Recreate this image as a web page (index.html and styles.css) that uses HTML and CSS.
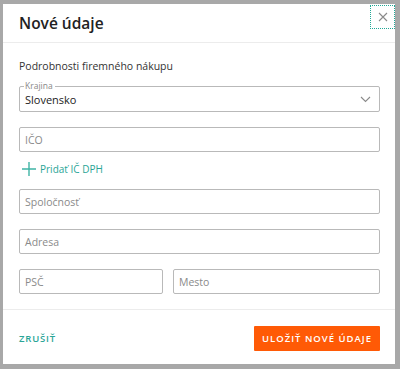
FILE: index.html
```html
<!DOCTYPE html>
<html lang="sk">
<head>
<meta charset="utf-8">
<link rel="stylesheet" href="styles.css">
</head>
<body>
<div class="modal">
  <div class="header">
    <h1 class="title">Nové údaje</h1>
    <button class="close" aria-label="Zavrieť">
      <svg width="10" height="10" viewBox="0 0 10 10"><path d="M1 1L9 9M9 1L1 9" stroke="#8a8a8a" stroke-width="1.1" fill="none"/></svg>
    </button>
  </div>
  <div class="body">
    <div class="subtitle">Podrobnosti firemného nákupu</div>
    <div class="field select">
      <span class="legend">Krajina</span>
      <span class="value">Slovensko</span>
      <svg class="chev" width="11" height="7" viewBox="0 0 11 7"><path d="M1 1L5.5 5.5L10 1" stroke="#8a8a8a" stroke-width="1.1" fill="none"/></svg>
    </div>
    <div class="field gap15"><span class="ph">IČO</span></div>
    <div class="add">
      <svg width="14" height="14" viewBox="0 0 14 14"><path d="M7 0V14M0 7H14" stroke="#3fb4a5" stroke-width="1.4" fill="none"/></svg>
      <span>Pridať IČ DPH</span>
    </div>
    <div class="field gap-sm"><span class="ph">Spoločnosť</span></div>
    <div class="field gap15"><span class="ph">Adresa</span></div>
    <div class="row gap15">
      <div class="field psc"><span class="ph">PSČ</span></div>
      <div class="field mesto"><span class="ph">Mesto</span></div>
    </div>
  </div>
  <div class="footer">
    <span class="cancel">ZRUŠIŤ</span>
    <button class="save">ULOŽIŤ NOVÉ ÚDAJE</button>
  </div>
</div>
</body>
</html>
```

FILE: styles.css
```css
html, body { margin: 0; padding: 0; }
body {
  background: #a8a8a8;
  font-family: "Open Sans", "Noto Sans", sans-serif;
  width: 400px;
  height: 369px;
  overflow: hidden;
}
.modal {
  margin: 4px 0 0 3px;
  width: 392px;
  height: 360px;
  background: #fff;
  display: flex;
  flex-direction: column;
}
.header {
  height: 38px;
  flex: none;
  border-bottom: 1px solid #ececec;
  display: flex;
  align-items: flex-start;
  justify-content: space-between;
  padding-left: 16px;
}
.title {
  margin: 10px 0 0 0;
  font-size: 15.5px;
  font-weight: 600;
  color: #222;
  line-height: 19px;
}
.close {
  margin-top: 1px;
  width: 25px;
  height: 24px;
  border: 1px dotted #21a896;
  background: #fff;
  padding: 0;
  display: flex;
  align-items: center;
  justify-content: center;
}
.body {
  flex: none;
  padding: 0 15px 0 16px;
  height: 266px;
  border-bottom: 1px solid #ececec;
}
.subtitle {
  margin-top: 16px;
  font-size: 10.5px;
  line-height: 14px;
  color: #333;
}
.field {
  box-sizing: border-box;
  height: 25px;
  border: 1px solid #b9b9b9;
  border-radius: 2px;
  display: flex;
  align-items: center;
  padding-left: 5px;
  position: relative;
}
.ph {
  font-size: 10.5px;
  color: #8a8a8a;
}
.select {
  margin-top: 13px;
  height: 26px;
  justify-content: space-between;
  padding-right: 8px;
}
.legend {
  position: absolute;
  top: -6px;
  left: 4px;
  background: #fff;
  padding: 0 2px 0 1px;
  font-size: 8.5px;
  line-height: 10px;
  color: #888;
}
.value {
  font-size: 11px;
  color: #222;
}
.gap15 { margin-top: 15px; }
.gap-sm { margin-top: 13px; }
.add {
  margin-top: 10px;
  height: 14px;
  display: flex;
  align-items: center;
  gap: 4px;
  padding-left: 3px;
  color: #2aa597;
  font-size: 10px;
}
.row {
  display: flex;
  gap: 10px;
}
.psc { width: 144px; }
.mesto { flex: 1; }
.footer {
  flex: 1;
  display: flex;
  align-items: center;
  justify-content: space-between;
  padding: 0 15px 0 16px;
}
.cancel {
  color: #2aa597;
  font-size: 9.5px;
  font-weight: 600;
  letter-spacing: 0.8px;
  margin-top: 2px;
}
.save {
  width: 126px;
  height: 25px;
  margin-top: 2px;
  border: none;
  border-radius: 1px;
  background: #ff5a06;
  color: #fff;
  font-family: inherit;
  font-size: 9.5px;
  font-weight: 600;
  letter-spacing: 1px;
  padding: 0;
}
```
